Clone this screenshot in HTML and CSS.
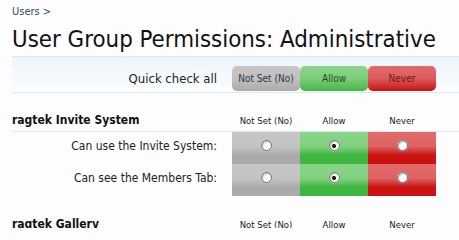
FILE: index.html
```html
<!DOCTYPE html>
<html>
<head>
<meta charset="utf-8">
<link rel="stylesheet" href="styles.css">
</head>
<body>
<div class="page">
  <div class="crumbs"><a href="#">Users</a> &gt;</div>
  <h1 class="title">User Group Permissions: Administrative</h1>
  <div class="quick">
    <span class="quick-label">Quick check all</span>
    <div class="quick-buttons">
      <span class="qbtn unset">Not Set (No)</span>
      <span class="qbtn allow">Allow</span>
      <span class="qbtn never">Never</span>
    </div>
  </div>

  <div class="section-head">
    <h3 class="section-title">ragtek Invite System</h3>
    <div class="cols">
      <span class="col">Not Set (No)</span>
      <span class="col">Allow</span>
      <span class="col">Never</span>
    </div>
  </div>
  <div class="perm">
    <span class="perm-label">Can use the Invite System:</span>
    <div class="cells">
      <span class="cell unset"><span class="radio"></span></span>
      <span class="cell allow"><span class="radio on"></span></span>
      <span class="cell never"><span class="radio"></span></span>
    </div>
  </div>
  <div class="perm">
    <span class="perm-label">Can see the Members Tab:</span>
    <div class="cells">
      <span class="cell unset"><span class="radio"></span></span>
      <span class="cell allow"><span class="radio on"></span></span>
      <span class="cell never"><span class="radio"></span></span>
    </div>
  </div>

  <div class="section-head second">
    <h3 class="section-title">ragtek Gallery</h3>
    <div class="cols">
      <span class="col">Not Set (No)</span>
      <span class="col">Allow</span>
      <span class="col">Never</span>
    </div>
  </div>
</div>
</body>
</html>
```
FILE: styles.css
```css
html, body {
  margin: 0;
  padding: 0;
  background: #fdfdff;
}
.page {
  padding: 5px 0 0 12px;
  font-family: "DejaVu Sans Condensed", "DejaVu Sans", sans-serif;
  color: #222;
  height: 228px;
  overflow: hidden;
  box-sizing: border-box;
}
.crumbs {
  font-size: 11px;
  line-height: 13px;
  color: #2b485c;
}
.crumbs a {
  color: #2b485c;
  text-decoration: none;
}
.title {
  margin: 5px 0 0 0;
  font-size: 23.8px;
  line-height: 32px;
  font-weight: normal;
  color: #111;
  white-space: nowrap;
  padding-bottom: 1px;
  border-bottom: 1px solid #d7e9f5;
}
.quick {
  display: flex;
  align-items: flex-end;
  height: 35px;
  padding-right: 23px;
  background: linear-gradient(to bottom, #edf5fb, #fbfdff);
  border-bottom: 1px solid #d7e9f5;
}
.quick-label {
  width: 205px;
  text-align: right;
  font-size: 13px;
  line-height: 25px;
  padding-right: 15px;
  color: #222;
  margin-bottom: 1px;
}
.quick-buttons {
  display: flex;
  margin-bottom: 1px;
}
.qbtn {
  width: 68px;
  height: 25px;
  line-height: 25px;
  text-align: center;
  font-size: 10px;
  border-radius: 5px;
}
.qbtn.unset {
  background: linear-gradient(to bottom, #c6c6c6 0%, #c2c2c2 50%, #aaaaaa 100%);
  color: #333;
}
.qbtn.allow {
  background: linear-gradient(to bottom, #8ad58a 0%, #7ccd7c 50%, #45b845 100%);
  color: #234a23;
}
.qbtn.never {
  background: linear-gradient(to bottom, #e26a6a 0%, #dd5b5b 50%, #c81212 100%);
  color: #6a1515;
}
.section-head {
  display: flex;
  align-items: flex-end;
  height: 35px;
  padding-bottom: 3px;
  border-bottom: 1px solid #d7e9f5;
}
.section-head.second {
  height: 36px;
  padding-bottom: 0;
  border-bottom: none;
}
.section-title {
  margin: 0;
  width: 220px;
  font-size: 12px;
  line-height: 15px;
  font-weight: bold;
  color: #111;
}
.cols {
  display: flex;
}
.col {
  width: 68px;
  text-align: center;
  font-size: 9.5px;
  line-height: 15px;
  color: #222;
}
.perm {
  display: flex;
  height: 32px;
}
.perm-label {
  width: 205px;
  padding-right: 15px;
  text-align: right;
  font-size: 12px;
  line-height: 28px;
  color: #222;
}
.cells {
  display: flex;
}
.cell {
  width: 68px;
  height: 32px;
  display: flex;
  justify-content: center;
  padding-top: 8px;
  box-sizing: border-box;
}
.cell.unset {
  background: linear-gradient(to bottom, #c7c7c7 0%, #c3c3c3 45%, #ababab 72%, #ababab 100%);
}
.cell.allow {
  background: linear-gradient(to bottom, #89d489 0%, #80d080 45%, #40b840 72%, #3fb63f 100%);
}
.cell.never {
  background: linear-gradient(to bottom, #e26b6b 0%, #dd6262 45%, #cc1414 72%, #cb1111 100%);
}
.radio {
  width: 9px;
  height: 9px;
  border-radius: 50%;
  background: #fff;
  border: 1px solid #666;
  box-shadow: inset 1px 1px 1px rgba(0,0,0,0.25), 0 0 1px rgba(255,255,255,0.8);
  position: relative;
}
.radio.on::after {
  content: "";
  position: absolute;
  left: 2.5px;
  top: 2.5px;
  width: 4px;
  height: 4px;
  border-radius: 50%;
  background: #000;
}
```
